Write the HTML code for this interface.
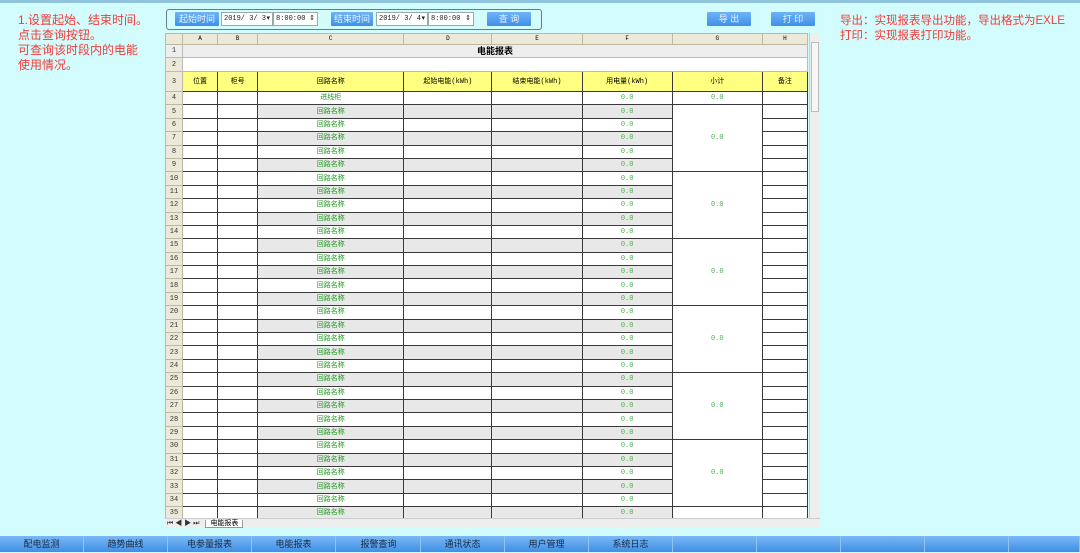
<!DOCTYPE html>
<html><head><meta charset="utf-8"><style>
*{margin:0;padding:0;box-sizing:border-box}
body{width:1080px;height:552px;background:#d3fdfd;position:relative;overflow:hidden;font-family:"Liberation Sans","Noto Sans CJK SC",sans-serif}
.topstrip{position:absolute;left:0;top:0;width:1080px;height:3px;background:#8fc3dc}
.note{position:absolute;color:#f23a3a;font-size:12px;line-height:15px}
.bar{position:absolute;left:166px;top:9px;width:376px;height:21px;border:1px solid #6a7a86;border-radius:3px;background:#d3fdfd}
.btn{position:absolute;height:14px;background:linear-gradient(#6fb3f5,#3f8fe8);color:#e8f3ff;font-size:9px;line-height:14px;text-align:center;border-radius:1px}
.inp{position:absolute;height:14px;background:#fff;border:1px solid #9aa;font-size:7px;line-height:12px;padding-left:2px;color:#222;font-family:"Liberation Mono",monospace;white-space:nowrap;overflow:hidden}
.inp b{position:absolute;right:2px;top:0;font-weight:normal}
table{position:absolute;left:165px;top:33px;border-collapse:collapse;table-layout:fixed;width:643px;font-size:7px;line-height:8px;font-family:"Liberation Mono","Noto Sans CJK SC",monospace}
td{border:1px solid #3a3a3a;text-align:center;vertical-align:middle;padding:0;overflow:hidden;white-space:nowrap;background:#fff}
td.h{background:#ece9d8;border-color:#bdb8a0;color:#333}
tr.ch td{background:#ece9d8;border-color:#bdb8a0;height:11px;font-size:6px}
tr.r1 td{background:#eee;height:13px;border-color:#bbb}
tr.r2 td{height:14px;border-color:#bbb}
tr.r3 td{background:#ffff80;height:20px}
tr.d td{height:13.4px}
tr.g td.c,tr.g td.e{background:#e8e8e8}
.gn{color:#1f9a1f}.v{color:#4caf50}
.sb{position:absolute;left:809px;top:33px;width:11px;height:488px;background:#eee;border-left:1px solid #ccc}
.sb i{position:absolute;left:1px;top:9px;width:8px;height:70px;background:#f6f6f6;border:1px solid #bbb}
.tabs{position:absolute;left:165px;top:518px;width:655px;height:10px;background:#eee;border-top:1px solid #ccc;font-size:7px;line-height:9px}
.nav{position:absolute;left:0;top:536px;width:1080px;height:16px;background:linear-gradient(#7ab8f5,#3f8fe6)}
.nav div{position:absolute;top:0;width:84px;height:16px;border-right:1px solid #8cc4f4;font-size:9px;line-height:17px;text-align:center;color:#1a2a40}
</style></head><body>
<div class="topstrip"></div>
<div class="note" style="left:18px;top:13px">1.设置起始、结束时间。<br>点击查询按钮。<br>可查询该时段内的电能<br>使用情况。</div>
<div class="note" style="left:840px;top:14px;font-size:11.5px">导出：实现报表导出功能，导出格式为EXLE<br>打印：实现报表打印功能。</div>
<div class="bar"></div>
<div class="btn" style="left:175px;top:12px;width:44px">起始时间</div>
<div class="inp" style="left:221px;top:12px;width:52px">2019/ 3/ 3<b>▾</b></div>
<div class="inp" style="left:273px;top:12px;width:45px">8:00:00<b>⇕</b></div>
<div class="btn" style="left:331px;top:12px;width:42px">结束时间</div>
<div class="inp" style="left:376px;top:12px;width:52px">2019/ 3/ 4<b>▾</b></div>
<div class="inp" style="left:428px;top:12px;width:46px">8:00:00<b>⇕</b></div>
<div class="btn" style="left:487px;top:12px;width:44px">查 询</div>
<div class="btn" style="left:707px;top:12px;width:44px">导 出</div>
<div class="btn" style="left:771px;top:12px;width:44px">打 印</div>
<table>
<colgroup><col style="width:17px"><col style="width:35px"><col style="width:40px"><col style="width:146px"><col style="width:88px"><col style="width:90px"><col style="width:90px"><col style="width:90px"><col style="width:45px"></colgroup>
<tr class="ch"><td></td><td>A</td><td>B</td><td>C</td><td>D</td><td>E</td><td>F</td><td>G</td><td>H</td></tr>
<tr class="r1"><td class="h">1</td><td colspan="8" style="font-size:9px;font-weight:bold;font-family:'Liberation Sans','Noto Sans CJK SC',sans-serif">电能报表</td></tr>
<tr class="r2"><td class="h">2</td><td colspan="8"></td></tr>
<tr class="r3"><td class="h" style="background:#ece9d8">3</td><td>位置</td><td>柜号</td><td>回路名称</td><td>起始电能(kWh)</td><td>结束电能(kWh)</td><td>用电量(kWh)</td><td>小计</td><td>备注</td></tr>
<tr class="d"><td class="h">4</td><td></td><td></td><td class="c gn">进线柜</td><td></td><td></td><td class="v">0.0</td><td class="v">0.0</td><td></td></tr>
<tr class="d g"><td class="h">5</td><td></td><td></td><td class="c gn">回路名称</td><td class="e"></td><td class="e"></td><td class="e v">0.0</td><td rowspan="5" class="v">0.0</td><td></td></tr>
<tr class="d"><td class="h">6</td><td></td><td></td><td class="c gn">回路名称</td><td></td><td></td><td class="v">0.0</td><td></td></tr>
<tr class="d g"><td class="h">7</td><td></td><td></td><td class="c gn">回路名称</td><td class="e"></td><td class="e"></td><td class="e v">0.0</td><td></td></tr>
<tr class="d"><td class="h">8</td><td></td><td></td><td class="c gn">回路名称</td><td></td><td></td><td class="v">0.0</td><td></td></tr>
<tr class="d g"><td class="h">9</td><td></td><td></td><td class="c gn">回路名称</td><td class="e"></td><td class="e"></td><td class="e v">0.0</td><td></td></tr>
<tr class="d"><td class="h">10</td><td></td><td></td><td class="c gn">回路名称</td><td></td><td></td><td class="v">0.0</td><td rowspan="5" class="v">0.0</td><td></td></tr>
<tr class="d g"><td class="h">11</td><td></td><td></td><td class="c gn">回路名称</td><td class="e"></td><td class="e"></td><td class="e v">0.0</td><td></td></tr>
<tr class="d"><td class="h">12</td><td></td><td></td><td class="c gn">回路名称</td><td></td><td></td><td class="v">0.0</td><td></td></tr>
<tr class="d g"><td class="h">13</td><td></td><td></td><td class="c gn">回路名称</td><td class="e"></td><td class="e"></td><td class="e v">0.0</td><td></td></tr>
<tr class="d"><td class="h">14</td><td></td><td></td><td class="c gn">回路名称</td><td></td><td></td><td class="v">0.0</td><td></td></tr>
<tr class="d g"><td class="h">15</td><td></td><td></td><td class="c gn">回路名称</td><td class="e"></td><td class="e"></td><td class="e v">0.0</td><td rowspan="5" class="v">0.0</td><td></td></tr>
<tr class="d"><td class="h">16</td><td></td><td></td><td class="c gn">回路名称</td><td></td><td></td><td class="v">0.0</td><td></td></tr>
<tr class="d g"><td class="h">17</td><td></td><td></td><td class="c gn">回路名称</td><td class="e"></td><td class="e"></td><td class="e v">0.0</td><td></td></tr>
<tr class="d"><td class="h">18</td><td></td><td></td><td class="c gn">回路名称</td><td></td><td></td><td class="v">0.0</td><td></td></tr>
<tr class="d g"><td class="h">19</td><td></td><td></td><td class="c gn">回路名称</td><td class="e"></td><td class="e"></td><td class="e v">0.0</td><td></td></tr>
<tr class="d"><td class="h">20</td><td></td><td></td><td class="c gn">回路名称</td><td></td><td></td><td class="v">0.0</td><td rowspan="5" class="v">0.0</td><td></td></tr>
<tr class="d g"><td class="h">21</td><td></td><td></td><td class="c gn">回路名称</td><td class="e"></td><td class="e"></td><td class="e v">0.0</td><td></td></tr>
<tr class="d"><td class="h">22</td><td></td><td></td><td class="c gn">回路名称</td><td></td><td></td><td class="v">0.0</td><td></td></tr>
<tr class="d g"><td class="h">23</td><td></td><td></td><td class="c gn">回路名称</td><td class="e"></td><td class="e"></td><td class="e v">0.0</td><td></td></tr>
<tr class="d"><td class="h">24</td><td></td><td></td><td class="c gn">回路名称</td><td></td><td></td><td class="v">0.0</td><td></td></tr>
<tr class="d g"><td class="h">25</td><td></td><td></td><td class="c gn">回路名称</td><td class="e"></td><td class="e"></td><td class="e v">0.0</td><td rowspan="5" class="v">0.0</td><td></td></tr>
<tr class="d"><td class="h">26</td><td></td><td></td><td class="c gn">回路名称</td><td></td><td></td><td class="v">0.0</td><td></td></tr>
<tr class="d g"><td class="h">27</td><td></td><td></td><td class="c gn">回路名称</td><td class="e"></td><td class="e"></td><td class="e v">0.0</td><td></td></tr>
<tr class="d"><td class="h">28</td><td></td><td></td><td class="c gn">回路名称</td><td></td><td></td><td class="v">0.0</td><td></td></tr>
<tr class="d g"><td class="h">29</td><td></td><td></td><td class="c gn">回路名称</td><td class="e"></td><td class="e"></td><td class="e v">0.0</td><td></td></tr>
<tr class="d"><td class="h">30</td><td></td><td></td><td class="c gn">回路名称</td><td></td><td></td><td class="v">0.0</td><td rowspan="5" class="v">0.0</td><td></td></tr>
<tr class="d g"><td class="h">31</td><td></td><td></td><td class="c gn">回路名称</td><td class="e"></td><td class="e"></td><td class="e v">0.0</td><td></td></tr>
<tr class="d"><td class="h">32</td><td></td><td></td><td class="c gn">回路名称</td><td></td><td></td><td class="v">0.0</td><td></td></tr>
<tr class="d g"><td class="h">33</td><td></td><td></td><td class="c gn">回路名称</td><td class="e"></td><td class="e"></td><td class="e v">0.0</td><td></td></tr>
<tr class="d"><td class="h">34</td><td></td><td></td><td class="c gn">回路名称</td><td></td><td></td><td class="v">0.0</td><td></td></tr>
<tr class="d g"><td class="h">35</td><td></td><td></td><td class="c gn">回路名称</td><td class="e"></td><td class="e"></td><td class="e v">0.0</td><td></td><td></td></tr>
</table>
<div class="sb"><i></i></div>
<div class="tabs"><span style="margin-left:2px;color:#333">⏮ ◀ ▶ ⏭</span><span style="margin-left:6px;background:#fff;padding:0 4px;border:1px solid #999;border-top:none">电能报表</span></div>
<div class="nav">
<div style="left:0">配电监测</div><div style="left:84px">趋势曲线</div><div style="left:168px">电参量报表</div><div style="left:252px">电能报表</div><div style="left:337px">报警查询</div><div style="left:421px">通讯状态</div><div style="left:505px">用户管理</div><div style="left:589px">系统日志</div><div style="left:673px"></div><div style="left:757px"></div><div style="left:841px"></div><div style="left:925px"></div><div style="left:1010px;width:70px"></div>
</div>
</body></html>
